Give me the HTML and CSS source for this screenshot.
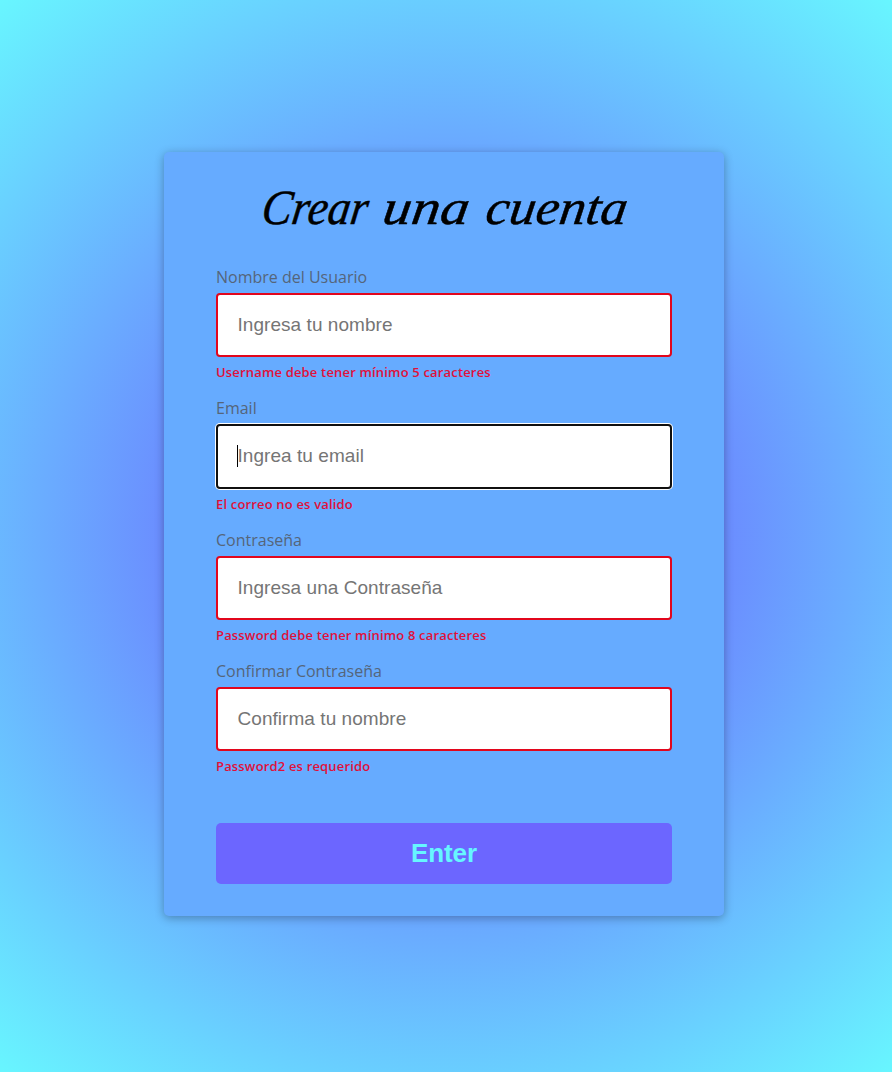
FILE: index.html
```
<!DOCTYPE html>
<html lang="es">
<head>
<meta charset="utf-8">
<title>Crear una cuenta</title>
<link rel="stylesheet" href="styles.css">
</head>
<body>
<main class="card">
  <h1 class="title"><span class="word word-first">Crear</span> <span class="word word-middle">una</span> <span class="word word-last">cuenta</span></h1>
  <form class="form" novalidate>
    <div class="field"><label for="u">Nombre del Usuario</label><input id="u" class="input" placeholder="Ingresa tu nombre"><small>Username debe tener mínimo 5 caracteres</small></div>
    <div class="field"><label for="e">Email</label><div class="focus-wrap"><input id="e" class="input input-focus" placeholder="Ingrea tu email"><span class="caret"></span></div><small>El correo no es valido</small></div>
    <div class="field"><label for="p">Contraseña</label><input id="p" class="input" placeholder="Ingresa una Contraseña"><small>Password debe tener mínimo 8 caracteres</small></div>
    <div class="field"><label for="c">Confirmar Contraseña</label><input id="c" class="input" placeholder="Confirma tu nombre"><small>Password2 es requerido</small></div>
    <button class="enter" type="button">Enter</button>
  </form>
</main>
</body>
</html>
```
FILE: styles.css
```
* { box-sizing: border-box; }
body {
  margin: 0;
  height: 1072px;
  padding: 152px 168px 0 164px;
  font-family: "Open Sans", sans-serif;
  background: radial-gradient(circle, #6c63ff 16%, #68f6ff);
}
.card {
  width: 560px;
  height: 764px;
  padding: 26px 52px 32px;
  border-radius: 5px;
  background: #66abff;
  box-shadow: 0 2px 10px rgba(0, 0, 0, .3);
}
.title {
  margin: 0;
  height: 86px;
  padding-right: 12px;
  display: flex;
  justify-content: center;
  font: italic 400 49px/60px "Liberation Serif", cursive;
  color: #000;
}
.word {
  white-space: nowrap;
  -webkit-text-stroke: .5px #000;
}
.word-first { transform: skewX(-8deg) scaleX(.92); }
.word-middle { margin-left: 17px; transform: skewX(-8deg) scaleX(1.17); }
.word-last { margin-left: 28px; transform: skewX(-8deg) scaleX(1.08); }
.field { height: 131.4px; display: flex; flex-direction: column; }
label { height: 29px; font-size: 16px; line-height: 27px; font-weight: 400; color: #55657a; }
.input {
  display: block;
  width: 100%;
  height: 64px;
  padding: 0 20px 0 19.5px;
  border: 2px solid #e2061c;
  border-radius: 4px;
  background: #fff;
  font: 19px "Liberation Sans", sans-serif;
  letter-spacing: .05px;
  outline: none;
}
.input::placeholder { color: #757575; }
.focus-wrap { position: relative; }
.input-focus { height: 65px; padding-bottom: 2px; border-color: #101010; box-shadow: 0 0 0 1px #fff; }
.caret { position: absolute; left: 21px; top: 21px; width: 1px; height: 22px; background: #000; }
small { margin-top: 5px; font-size: 13px; line-height: 20px; font-weight: 600; letter-spacing: .17px; color: #e0103a; }
.enter {
  display: block;
  width: 100%;
  height: 61px;
  margin-top: 33px;
  border: 0;
  border-radius: 5px;
  background: #6c66ff;
  color: #66f6ff;
  font: bold 26px "Liberation Sans", sans-serif;
  letter-spacing: -.1px;
}
```
